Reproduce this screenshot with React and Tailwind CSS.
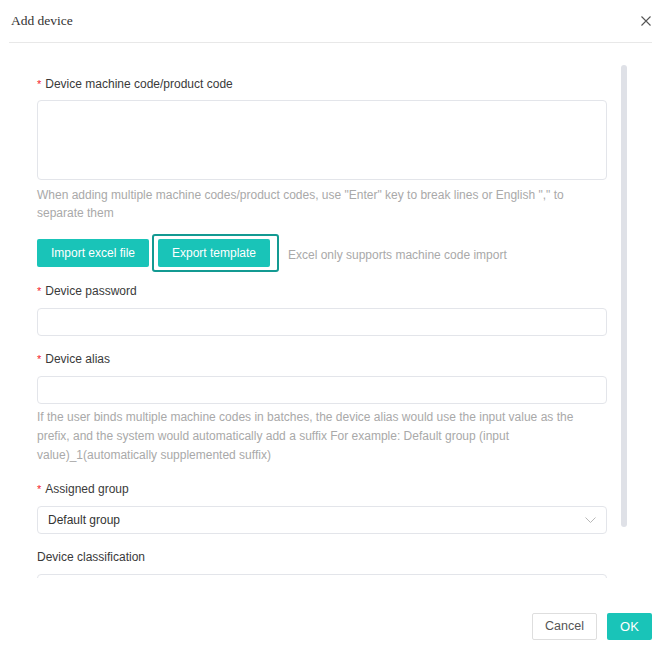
import React from 'react';

const Label = ({ required, children, className = '' }) => (
  <div className={`h-[20px] leading-[20px] text-[12px] text-[#3a3a3a] ${className}`}>
    {required && <span className="text-[#f5222d] mr-[4px] text-[11px]">*</span>}
    {children}
  </div>
);

const Help = ({ children, className = '' }) => (
  <p className={`text-[12px] text-[#a9a9a9] ${className}`}>{children}</p>
);

const inputBox = 'w-[570px] border border-[#e3e5ea] rounded-[4px] bg-white';

const AddDeviceDialog = () => {
  return (
    <div className="w-[664px] h-[654px] bg-white flex flex-col font-['Liberation_Sans',Arial,sans-serif]">
      {/* header */}
      <div className="ml-[9px] mr-[12px] h-[43px] border-b border-[#e8e8e8] flex items-center justify-between">
        <span className="pl-[2px] text-[13.5px] text-[#333] font-['Liberation_Serif',serif]">Add device</span>
        <button className="w-[14px] h-[14px] -mr-[1px] mb-[1px] flex items-center justify-center text-[#555]">
          <svg width="10" height="10" viewBox="0 0 10 10" fill="none" stroke="currentColor" strokeWidth="1.1">
            <path d="M0.5 0.5L9.5 9.5M9.5 0.5L0.5 9.5" />
          </svg>
        </button>
      </div>

      {/* scrolling body */}
      <div className="h-[535px] overflow-hidden flex">
        <div className="pl-[37px] pt-[31px] w-[621px]">
          <Label required>Device machine code/product code</Label>
          <div className={`${inputBox} h-[80px] mt-[6px]`} />
          <Help className="mt-[6px] leading-[18px] w-[570px]">
            When adding multiple machine codes/product codes, use "Enter" key to break lines or English "," to separate them
          </Help>

          <div className="mt-[12px] flex items-center h-[38px]">
            <button className="w-[112px] h-[28px] rounded-[2px] bg-[#19c4b8] text-white text-[12px]">Import excel file</button>
            <span className="ml-[3px] border-2 border-[#139a92] rounded-[3px] pl-[4px] pr-[7px] py-[3px] flex">
              <button className="w-[112px] h-[28px] rounded-[2px] bg-[#19c4b8] text-white text-[12px]">Export template</button>
            </span>
            <span className="ml-[9px] mt-[3px] text-[12px] text-[#a9a9a9]">Excel only supports machine code import</span>
          </div>

          <Label required className="mt-[9px]">Device password</Label>
          <div className={`${inputBox} h-[28px] mt-[7px]`} />

          <Label required className="mt-[13px]">Device alias</Label>
          <div className={`${inputBox} h-[28px] mt-[7px]`} />
          <Help className="mt-[4px] leading-[19px] w-[560px]">
            If the user binds multiple machine codes in batches, the device alias would use the input value as the prefix, and the system would automatically add a suffix For example: Default group (input value)_1(automatically supplemented suffix)
          </Help>

          <Label required className="mt-[14px]">Assigned group</Label>
          <div className={`${inputBox} h-[28px] mt-[7px] flex items-center justify-between pl-[10px] pr-[10px]`}>
            <span className="text-[12px] text-[#333]">Default group</span>
            <svg width="11" height="7" viewBox="0 0 11 7" fill="none" stroke="#b8b8b8" strokeWidth="1">
              <path d="M0.5 0.5L5.5 5.5L10.5 0.5" />
            </svg>
          </div>

          <Label className="mt-[13px]">Device classification</Label>
          <div className={`${inputBox} h-[28px] mt-[7px]`} />
        </div>

        {/* scrollbar */}
        <div className="pt-[22px]">
          <div className="w-[6px] h-[462px] rounded-full bg-[#dfe1e7]" />
        </div>
      </div>

      {/* footer */}
      <div className="flex-1 flex justify-end items-start pt-[35px] pr-[12px] gap-[10px]">
        <button className="w-[65px] h-[27px] border border-[#dedede] rounded-[2px] text-[12.5px] text-[#555] bg-white">Cancel</button>
        <button className="w-[45px] h-[27px] rounded-[2px] bg-[#19c4b8] text-white text-[13px]">OK</button>
      </div>
    </div>
  );
};

export default function App() {
  return <AddDeviceDialog />;
}
